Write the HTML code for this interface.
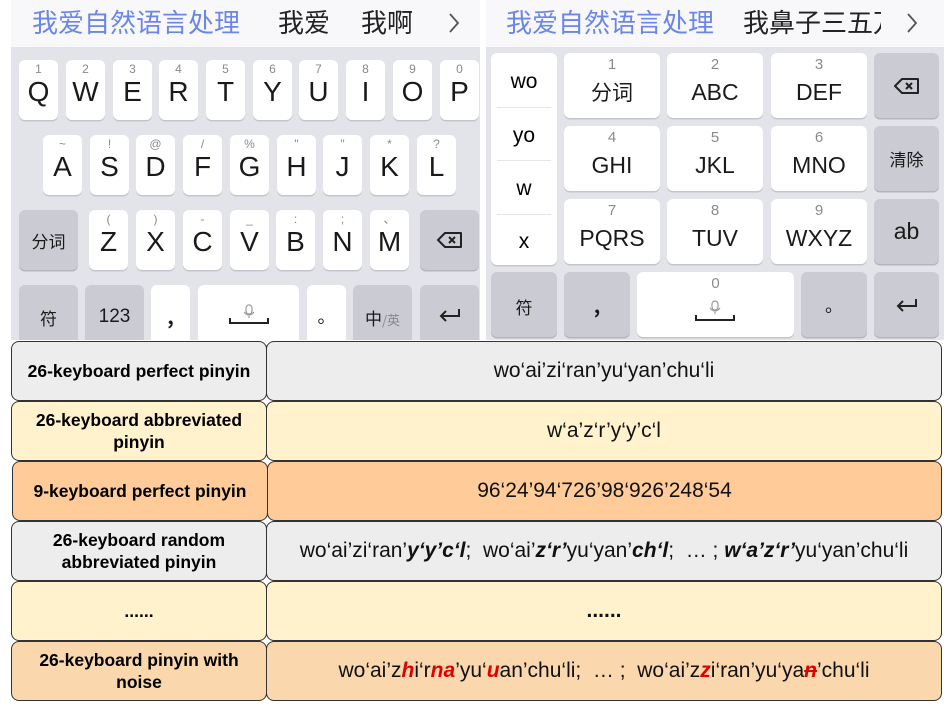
<!DOCTYPE html>
<html><head><meta charset="utf-8"><style>
*{margin:0;padding:0;box-sizing:border-box}
body{width:948px;height:707px;background:#fff;position:relative;overflow:hidden;font-family:"Liberation Sans","Noto Sans CJK SC",sans-serif}
.a{position:absolute}
.cb{position:absolute;top:0;height:47px;background:#f8f8fa}
.cand{position:absolute;top:5px;font-size:26px;line-height:34px;color:#222;white-space:nowrap;font-family:"Noto Sans CJK SC",sans-serif}
.blue{color:#6a86e8}
.kb{position:absolute;top:47px;height:293px;background:#e3e3ea}
.k{position:absolute;background:#fff;border-radius:6px;box-shadow:0 1.5px 0 #c4c4cc;text-align:center;color:#1a1a1a}
.g{background:#cbcbd3;box-shadow:0 1.5px 0 #b4b4bc}
.n{position:absolute;left:0;right:0;top:2px;font-size:12px;color:#8a8a8a;line-height:14px}
.L{position:absolute;left:0;right:0;top:16px;font-size:28px;line-height:32px}
.c{position:absolute;left:0;right:0;font-family:"Noto Sans CJK SC",sans-serif}
.cell{position:absolute;border:1.5px solid #333;border-radius:8px;display:flex;align-items:center;justify-content:center;text-align:center}
.lh{font-weight:bold;font-size:17.5px;line-height:22px;color:#000}
.rt{font-size:21px;color:#111;white-space:nowrap}
.r{color:#e00000;font-weight:bold;font-style:italic}
.b{font-weight:bold;font-style:italic}
</style></head><body>

<div class="cb" style="left:11px;width:469px"></div>
<div class="cand blue" style="left:32px">我爱自然语言处理</div>
<div class="cand" style="left:278px">我爱</div>
<div class="cand" style="left:361px">我啊</div>
<svg class="a" style="left:447px;top:12px" width="14" height="22" viewBox="0 0 14 22"><path d="M3 2L11 11L3 20" fill="none" stroke="#555" stroke-width="1.8"/></svg>
<div class="cb" style="left:486px;width:458px"></div>
<div class="cand blue" style="left:506px">我爱自然语言处理</div>
<div class="cand" style="left:743px;width:138px;overflow:hidden">我鼻子三五万</div>
<svg class="a" style="left:905px;top:12px" width="14" height="22" viewBox="0 0 14 22"><path d="M3 2L11 11L3 20" fill="none" stroke="#555" stroke-width="1.8"/></svg>

<div class="kb" style="left:11px;width:469px"></div>
<div class="k" style="left:19px;top:60px;width:39px;height:60px"><div class="n">1</div><div class="L">Q</div></div>
<div class="k" style="left:66px;top:60px;width:39px;height:60px"><div class="n">2</div><div class="L">W</div></div>
<div class="k" style="left:113px;top:60px;width:39px;height:60px"><div class="n">3</div><div class="L">E</div></div>
<div class="k" style="left:159px;top:60px;width:39px;height:60px"><div class="n">4</div><div class="L">R</div></div>
<div class="k" style="left:206px;top:60px;width:39px;height:60px"><div class="n">5</div><div class="L">T</div></div>
<div class="k" style="left:253px;top:60px;width:39px;height:60px"><div class="n">6</div><div class="L">Y</div></div>
<div class="k" style="left:299px;top:60px;width:39px;height:60px"><div class="n">7</div><div class="L">U</div></div>
<div class="k" style="left:346px;top:60px;width:39px;height:60px"><div class="n">8</div><div class="L">I</div></div>
<div class="k" style="left:393px;top:60px;width:39px;height:60px"><div class="n">9</div><div class="L">O</div></div>
<div class="k" style="left:440px;top:60px;width:39px;height:60px"><div class="n">0</div><div class="L">P</div></div>
<div class="k" style="left:43px;top:135px;width:39px;height:60px"><div class="n">~</div><div class="L">A</div></div>
<div class="k" style="left:90px;top:135px;width:39px;height:60px"><div class="n">!</div><div class="L">S</div></div>
<div class="k" style="left:136px;top:135px;width:39px;height:60px"><div class="n">@</div><div class="L">D</div></div>
<div class="k" style="left:183px;top:135px;width:39px;height:60px"><div class="n">/</div><div class="L">F</div></div>
<div class="k" style="left:230px;top:135px;width:39px;height:60px"><div class="n">%</div><div class="L">G</div></div>
<div class="k" style="left:277px;top:135px;width:39px;height:60px"><div class="n">"</div><div class="L">H</div></div>
<div class="k" style="left:323px;top:135px;width:39px;height:60px"><div class="n">"</div><div class="L">J</div></div>
<div class="k" style="left:370px;top:135px;width:39px;height:60px"><div class="n">*</div><div class="L">K</div></div>
<div class="k" style="left:417px;top:135px;width:39px;height:60px"><div class="n">?</div><div class="L">L</div></div>
<div class="k g" style="left:19px;top:210px;width:59px;height:60px"><div class="c" style="top:18px;font-size:17px">分词</div></div>
<div class="k" style="left:89px;top:210px;width:39px;height:60px"><div class="n">(</div><div class="L">Z</div></div>
<div class="k" style="left:136px;top:210px;width:39px;height:60px"><div class="n">)</div><div class="L">X</div></div>
<div class="k" style="left:183px;top:210px;width:39px;height:60px"><div class="n">-</div><div class="L">C</div></div>
<div class="k" style="left:230px;top:210px;width:39px;height:60px"><div class="n">_</div><div class="L">V</div></div>
<div class="k" style="left:276px;top:210px;width:39px;height:60px"><div class="n">:</div><div class="L">B</div></div>
<div class="k" style="left:323px;top:210px;width:39px;height:60px"><div class="n">;</div><div class="L">N</div></div>
<div class="k" style="left:370px;top:210px;width:39px;height:60px"><div class="n">、</div><div class="L">M</div></div>
<div class="k g" style="left:420px;top:210px;width:59px;height:60px"><svg class="a" style="left:17px;top:22px" width="26" height="16" viewBox="0 0 26 16"><path d="M8 1H24V15H8L1 8Z" fill="none" stroke="#222" stroke-width="2" stroke-linejoin="round"/><path d="M12 5L18 11M18 5L12 11" stroke="#222" stroke-width="2"/></svg></div>
<div class="k g" style="left:19px;top:285px;width:59px;height:60px"><div class="c" style="top:20px;font-size:17px">符</div></div>
<div class="k g" style="left:85px;top:285px;width:59px;height:60px"><div class="a" style="left:0;right:0;top:21px;font-size:19px">123</div></div>
<div class="k" style="left:151px;top:285px;width:39px;height:60px"><div class="c" style="top:16px;font-size:20px;font-weight:bold">,</div></div>
<div class="k" style="left:198px;top:285px;width:101px;height:60px"><svg class="a" style="left:31px;top:19px" width="40" height="22" viewBox="0 0 40 22"><rect x="17" y="1" width="6" height="9" rx="3" fill="none" stroke="#999" stroke-width="1.2"/><path d="M15 8Q20 14 25 8M20 12V14" fill="none" stroke="#999" stroke-width="1.2"/><path d="M1 14V19H39V14" fill="none" stroke="#222" stroke-width="2"/></svg></div>
<div class="k" style="left:307px;top:285px;width:39px;height:60px"><div class="c" style="top:18px;font-size:18px">。</div></div>
<div class="k g" style="left:353px;top:285px;width:59px;height:60px"><div class="c" style="top:20px;font-size:17px">中<span style="color:#888;font-size:13px">/英</span></div></div>
<div class="k g" style="left:420px;top:285px;width:59px;height:60px"><svg class="a" style="left:18px;top:22px" width="24" height="16" viewBox="0 0 24 16"><path d="M21 2V9H3M8 4L3 9L8 14" fill="none" stroke="#222" stroke-width="2"/></svg></div>
<div class="a" style="left:11px;top:340px;width:469px;height:2px;background:#fff"></div>

<div class="kb" style="left:486px;width:458px"></div>
<div class="k" style="left:491px;top:53px;width:66px;height:212px"></div>
<div class="a" style="left:491px;top:70px;width:66px;text-align:center;font-size:21px">wo</div>
<div class="a" style="left:491px;top:124px;width:66px;text-align:center;font-size:21px">yo</div>
<div class="a" style="left:491px;top:177px;width:66px;text-align:center;font-size:21px">w</div>
<div class="a" style="left:491px;top:230px;width:66px;text-align:center;font-size:21px">x</div>
<div class="a" style="left:497px;top:107px;width:54px;height:1px;background:#e6e6ea"></div>
<div class="a" style="left:497px;top:160px;width:54px;height:1px;background:#e6e6ea"></div>
<div class="a" style="left:497px;top:214px;width:54px;height:1px;background:#e6e6ea"></div>

<div class="k" style="left:564px;top:53px;width:96px;height:65px"><div class="n" style="top:5px;font-size:15px">1</div><div class="c" style="top:24px;font-size:21px">分词</div></div>
<div class="k" style="left:667px;top:53px;width:96px;height:65px"><div class="n" style="top:5px;font-size:15px">2</div><div class="L" style="top:23px;font-size:23px">ABC</div></div>
<div class="k" style="left:771px;top:53px;width:96px;height:65px"><div class="n" style="top:5px;font-size:15px">3</div><div class="L" style="top:23px;font-size:23px">DEF</div></div>
<div class="k g" style="left:874px;top:53px;width:65px;height:65px"><svg class="a" style="left:20px;top:25px" width="26" height="16" viewBox="0 0 26 16"><path d="M8 1H24V15H8L1 8Z" fill="none" stroke="#222" stroke-width="2" stroke-linejoin="round"/><path d="M12 5L18 11M18 5L12 11" stroke="#222" stroke-width="2"/></svg></div>
<div class="k" style="left:564px;top:126px;width:96px;height:65px"><div class="n" style="top:5px;font-size:15px">4</div><div class="L" style="top:23px;font-size:23px">GHI</div></div>
<div class="k" style="left:667px;top:126px;width:96px;height:65px"><div class="n" style="top:5px;font-size:15px">5</div><div class="L" style="top:23px;font-size:23px">JKL</div></div>
<div class="k" style="left:771px;top:126px;width:96px;height:65px"><div class="n" style="top:5px;font-size:15px">6</div><div class="L" style="top:23px;font-size:23px">MNO</div></div>
<div class="k g" style="left:874px;top:126px;width:65px;height:65px"><div class="c" style="top:20px;font-size:17px">清除</div></div>
<div class="k" style="left:564px;top:199px;width:96px;height:65px"><div class="n" style="top:5px;font-size:15px">7</div><div class="L" style="top:23px;font-size:23px">PQRS</div></div>
<div class="k" style="left:667px;top:199px;width:96px;height:65px"><div class="n" style="top:5px;font-size:15px">8</div><div class="L" style="top:23px;font-size:23px">TUV</div></div>
<div class="k" style="left:771px;top:199px;width:96px;height:65px"><div class="n" style="top:5px;font-size:15px">9</div><div class="L" style="top:23px;font-size:23px">WXYZ</div></div>
<div class="k g" style="left:874px;top:199px;width:65px;height:65px"><div class="a" style="left:0;right:0;top:19px;font-size:23px">ab</div></div>
<div class="k g" style="left:491px;top:272px;width:66px;height:65px"><div class="c" style="top:22px;font-size:17px">符</div></div>
<div class="k g" style="left:564px;top:272px;width:66px;height:65px"><div class="c" style="top:18px;font-size:20px;font-weight:bold">,</div></div>
<div class="k" style="left:637px;top:272px;width:157px;height:65px"><div class="n" style="top:5px;font-size:15px">0</div><svg class="a" style="left:58px;top:27px" width="40" height="24" viewBox="0 0 40 24"><rect x="17" y="2" width="6" height="9" rx="3" fill="none" stroke="#999" stroke-width="1.2"/><path d="M15 9Q20 15 25 9M20 13V15" fill="none" stroke="#999" stroke-width="1.2"/><path d="M1 16V21H39V16" fill="none" stroke="#222" stroke-width="2"/></svg></div>
<div class="k g" style="left:801px;top:272px;width:66px;height:65px"><div class="c" style="top:20px;font-size:18px">。</div></div>
<div class="k g" style="left:874px;top:272px;width:65px;height:65px"><svg class="a" style="left:21px;top:25px" width="24" height="16" viewBox="0 0 24 16"><path d="M21 2V9H3M8 4L3 9L8 14" fill="none" stroke="#222" stroke-width="2"/></svg></div>

<div class="cell lh" style="left:11px;top:341px;width:256px;height:60px;background:#ededed">26-keyboard perfect pinyin</div>
<div class="cell rt" style="left:266px;top:341px;width:676px;height:60px;background:#ededed">wo‘ai’zi‘ran’yu‘yan’chu‘li</div>
<div class="cell lh" style="left:11px;top:401px;width:256px;height:60px;background:#fff2cc">26-keyboard abbreviated<br>pinyin</div>
<div class="cell rt" style="left:266px;top:401px;width:676px;height:60px;background:#fff2cc">w‘a’z‘r’y‘y’c‘l</div>
<div class="cell lh" style="left:12px;top:461px;width:256px;height:60px;background:#ffcc99">9-keyboard perfect pinyin</div>
<div class="cell rt" style="left:267px;top:461px;width:675px;height:60px;background:#ffcc99">96‘24’94‘726’98‘926’248‘54</div>
<div class="cell lh" style="left:11px;top:521px;width:256px;height:60px;background:#ededed">26-keyboard random<br>abbreviated pinyin</div>
<div class="cell rt" style="left:266px;top:521px;width:676px;height:60px;background:#ededed">wo‘ai’zi‘ran’<span class="b">y‘y’c‘l</span>;&nbsp; wo‘ai’<span class="b">z‘r’</span>yu‘yan’<span class="b">ch‘l</span>;&nbsp; … ;&nbsp; <span class="b">w‘a’z‘r’</span>yu‘yan’chu‘li</div>
<div class="cell lh" style="left:11px;top:581px;width:256px;height:60px;background:#fff2cc">......</div>
<div class="cell rt" style="left:266px;top:581px;width:676px;height:60px;background:#fff2cc;font-weight:bold">......</div>
<div class="cell lh" style="left:11px;top:641px;width:256px;height:60px;background:#fad7ac">26-keyboard pinyin with<br>noise</div>
<div class="cell rt" style="left:266px;top:641px;width:676px;height:60px;background:#fad7ac">wo‘ai’z<span class="r">h</span>i‘r<span class="r">na</span>’yu‘<span class="r">u</span>an’chu‘li;&nbsp; … ;&nbsp; wo‘ai’z<span class="r">z</span>i‘ran’yu‘ya<span class="r"><s>n</s></span>’chu‘li</div>
</body></html>
